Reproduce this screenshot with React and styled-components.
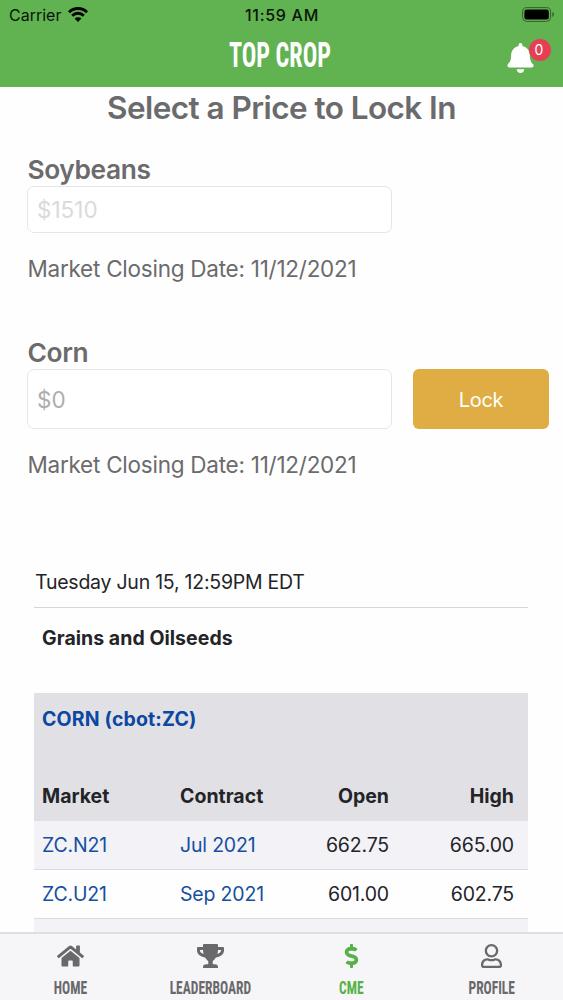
import React from "react";
import styled, { createGlobalStyle } from "styled-components";
import { FaBell, FaHome, FaTrophy, FaDollarSign, FaRegUser } from "react-icons/fa";

const contracts = [
  { market: "ZC.N21", contract: "Jul 2021", open: "662.75", high: "665.00" },
  { market: "ZC.U21", contract: "Sep 2021", open: "601.00", high: "602.75" },
];

const tabs = [
  { label: "Home", icon: <FaHome /> },
  { label: "Leaderboard", icon: <FaTrophy /> },
  { label: "CME", icon: <FaDollarSign />, active: true },
  { label: "Profile", icon: <FaRegUser /> },
];

export default function App() {
  return (
    <Screen>
      <GlobalStyle />
      <Header>
        <StatusBar>
          <Carrier>
            Carrier
            <WifiIcon />
          </Carrier>
          <Clock>11:59 AM</Clock>
          <BatteryIcon />
        </StatusBar>
        <TitleBar>
          <Brand>TOP CROP</Brand>
          <BellButton>
            <FaBell />
            <Badge>0</Badge>
          </BellButton>
        </TitleBar>
      </Header>

      <Main>
        <Heading>Select a Price to Lock In</Heading>
        <Crops>
          <Crop>
            <CropName>Soybeans</CropName>
            <PriceRow $height="47px">
              <PriceInput placeholder="$1510" disabled />
            </PriceRow>
            <ClosingDate>Market Closing Date: 11/12/2021</ClosingDate>
          </Crop>
          <Crop>
            <CropName>Corn</CropName>
            <PriceRow $height="60px">
              <PriceInput placeholder="$0" />
              <LockButton>Lock</LockButton>
            </PriceRow>
            <ClosingDate>Market Closing Date: 11/12/2021</ClosingDate>
          </Crop>
        </Crops>

        <Quotes>
          <Timestamp>Tuesday Jun 15, 12:59PM EDT</Timestamp>
          <GroupTitle>Grains and Oilseeds</GroupTitle>
          <TableHead>
            <Commodity>CORN (cbot:ZC)</Commodity>
            <Columns>
              <span>Market</span>
              <span>Contract</span>
              <Price>Open</Price>
              <Price>High</Price>
            </Columns>
          </TableHead>
          {contracts.map((c) => (
            <Row key={c.market}>
              <QuoteLink>{c.market}</QuoteLink>
              <QuoteLink>{c.contract}</QuoteLink>
              <Price>{c.open}</Price>
              <Price>{c.high}</Price>
            </Row>
          ))}
          <Row />
        </Quotes>
      </Main>

      <TabBar>
        {tabs.map((tab) => (
          <Tab key={tab.label} $active={tab.active}>
            {tab.icon}
            <TabLabel>{tab.label}</TabLabel>
          </Tab>
        ))}
      </TabBar>
    </Screen>
  );
}

function WifiIcon() {
  return (
    <svg width="20" height="15" viewBox="0 0 20 15" fill="none" stroke="#000">
      <path d="M1 5.300a12.700 12.700 0 0 1 18 0" strokeWidth="2.900" />
      <path d="M4.200 8.700a8.100 8.100 0 0 1 11.600 0" strokeWidth="2.800" />
      <path d="M10 15 6.600 11.600a4.800 4.800 0 0 1 6.800 0Z" fill="#000" stroke="none" />
    </svg>
  );
}

function BatteryIcon() {
  return (
    <svg width="33" height="15" viewBox="0 0 33 15">
      <rect x="0.6" y="0.6" width="28" height="13.8" rx="4" fill="none" stroke="#35612d" />
      <rect x="2.4" y="2.5" width="24.4" height="10" rx="2.2" fill="#000" />
      <path d="M30.3 5v5c1-.4 1.600-1.400 1.600-2.500S31.300 5.400 30.300 5Z" fill="#35612d" />
    </svg>
  );
}

const GlobalStyle = createGlobalStyle`
  * {
    box-sizing: border-box;
  }
  body {
    margin: 0;
    background: #fefefe;
    font-family: Inter, "Liberation Sans", sans-serif;
  }
`;

const Screen = styled.div`
  display: flex;
  flex-direction: column;
  height: 1000px;
  overflow: hidden;
`;

const Header = styled.header`
  flex: none;
  height: 87px;
  background: #61b251;
`;

const StatusBar = styled.div`
  display: grid;
  grid-template-columns: 1fr auto 1fr;
  align-items: center;
  height: 29px;
  padding: 0 8px 0 9px;
  font-size: 16px;
  line-height: 30px;
  color: #0a1508;
  > svg {
    justify-self: end;
    margin-top: -2px;
  }
`;

const Carrier = styled.div`
  display: flex;
  align-items: center;
  gap: 7px;
  svg {
    margin-top: -2px;
  }
`;

const Clock = styled.div`
  font-weight: 500;
  letter-spacing: 0.7px;
`;

const TitleBar = styled.div`
  display: grid;
  grid-template-columns: 1fr auto 1fr;
  align-items: center;
  height: 53px;
  padding-right: 3px;
`;

const Brand = styled.h1`
  grid-column: 2;
  margin: 0;
  font: 700 35px/53px "Roboto Condensed", Roboto, sans-serif;
  color: #fff;
  transform: scaleX(0.69);
`;

const BellButton = styled.div`
  position: relative;
  justify-self: end;
  display: flex;
  margin: 4px 26px 0 0;
  color: #fff;
  svg {
    width: 27px;
    height: 30px;
  }
`;

const Badge = styled.span`
  position: absolute;
  top: -4px;
  right: -17px;
  width: 22px;
  height: 22px;
  border-radius: 50%;
  background: #e63f54;
  font-size: 14px;
  line-height: 22px;
  text-align: center;
  text-indent: -2px;
`;

const Main = styled.main`
  flex: 1;
  min-height: 0;
  overflow: hidden;
`;

const Heading = styled.h2`
  margin: 0 0 27px;
  font-size: 31.5px;
  font-weight: 600;
  line-height: 41px;
  height: 40px;
  letter-spacing: -0.56px;
  text-align: center;
  color: #6b6b6d;
`;

const Crops = styled.section`
  display: flex;
  flex-direction: column;
  gap: 53px;
  padding: 0 14px 0 27px;
`;

const Crop = styled.div`
  color: #6b6b6d;
`;

const CropName = styled.h3`
  margin: 0;
  padding-left: 0.5px;
  font-size: 26.3px;
  font-weight: 600;
  line-height: 32px;
  letter-spacing: -0.38px;
`;

const PriceRow = styled.div`
  display: grid;
  grid-template-columns: 365px 136px;
  justify-content: space-between;
  height: ${(p) => p.$height};
`;

const PriceInput = styled.input`
  min-width: 0;
  padding: 0 9px;
  border: 1px solid #e6e6ea;
  border-radius: 7px;
  background: #fff;
  font: 400 22.5px Inter, sans-serif;
  &::placeholder {
    color: #aeaeb0;
    opacity: 1;
  }
  &:disabled::placeholder {
    color: #dadadc;
  }
`;

const LockButton = styled.button`
  padding: 1px 0 0;
  border: none;
  border-radius: 6px;
  background: #dfad44;
  color: #fff;
  font: 400 20px Inter, sans-serif;
  letter-spacing: -0.3px;
`;

const ClosingDate = styled.p`
  margin: 20px 0 0;
  padding-left: 0.5px;
  font-size: 22.5px;
  line-height: 31px;
  letter-spacing: -0.25px;
`;

const Quotes = styled.section`
  margin: 80px 35px 0 34px;
  font-size: 19.5px;
  color: #242428;
`;

const Timestamp = styled.div`
  padding: 0 1px 3px;
  border-bottom: 1px solid #d6d6d8;
  line-height: 44px;
  letter-spacing: -0.24px;
`;

const GroupTitle = styled.h4`
  margin: 0 0 25px;
  padding-left: 8px;
  font-size: 19.5px;
  font-weight: 700;
  line-height: 60px;
  letter-spacing: 0.04px;
`;

const TableHead = styled.div`
  display: flex;
  flex-direction: column;
  justify-content: space-between;
  height: 128px;
  background: #e1e1e5;
  font-weight: 700;
`;

const Commodity = styled.div`
  padding-left: 8px;
  line-height: 52px;
  letter-spacing: 0.15px;
  color: #0c47a1;
`;

const Columns = styled.div`
  display: grid;
  grid-template-columns: 138px 100px 109px 125px;
  padding: 0 14px 0 8px;
  line-height: 50px;
`;

const Row = styled(Columns)`
  height: 49px;
  border-bottom: 1px solid #dcdce0;
  line-height: 48px;
  letter-spacing: -0.18px;
  &:nth-of-type(odd) {
    background: #f2f2f7;
  }
`;

const QuoteLink = styled.a`
  color: #164f9f;
`;

const Price = styled.span`
  text-align: right;
`;

const TabBar = styled.nav`
  flex: none;
  display: grid;
  grid-template-columns: repeat(4, 1fr);
  height: 68px;
  padding-right: 1px;
  border-top: 2px solid #dedee1;
  background: #f6f6f8;
`;

const Tab = styled.div`
  display: flex;
  flex-direction: column;
  align-items: center;
  padding-top: 10px;
  color: ${(p) => (p.$active ? "#56b148" : "#69696b")};
  svg {
    width: 27px;
    height: 24px;
  }
`;

const TabLabel = styled.span`
  margin-top: 8px;
  font: 700 19px/24px "Roboto Condensed", Roboto, sans-serif;
  text-transform: uppercase;
  transform: scaleX(0.71);
`;
